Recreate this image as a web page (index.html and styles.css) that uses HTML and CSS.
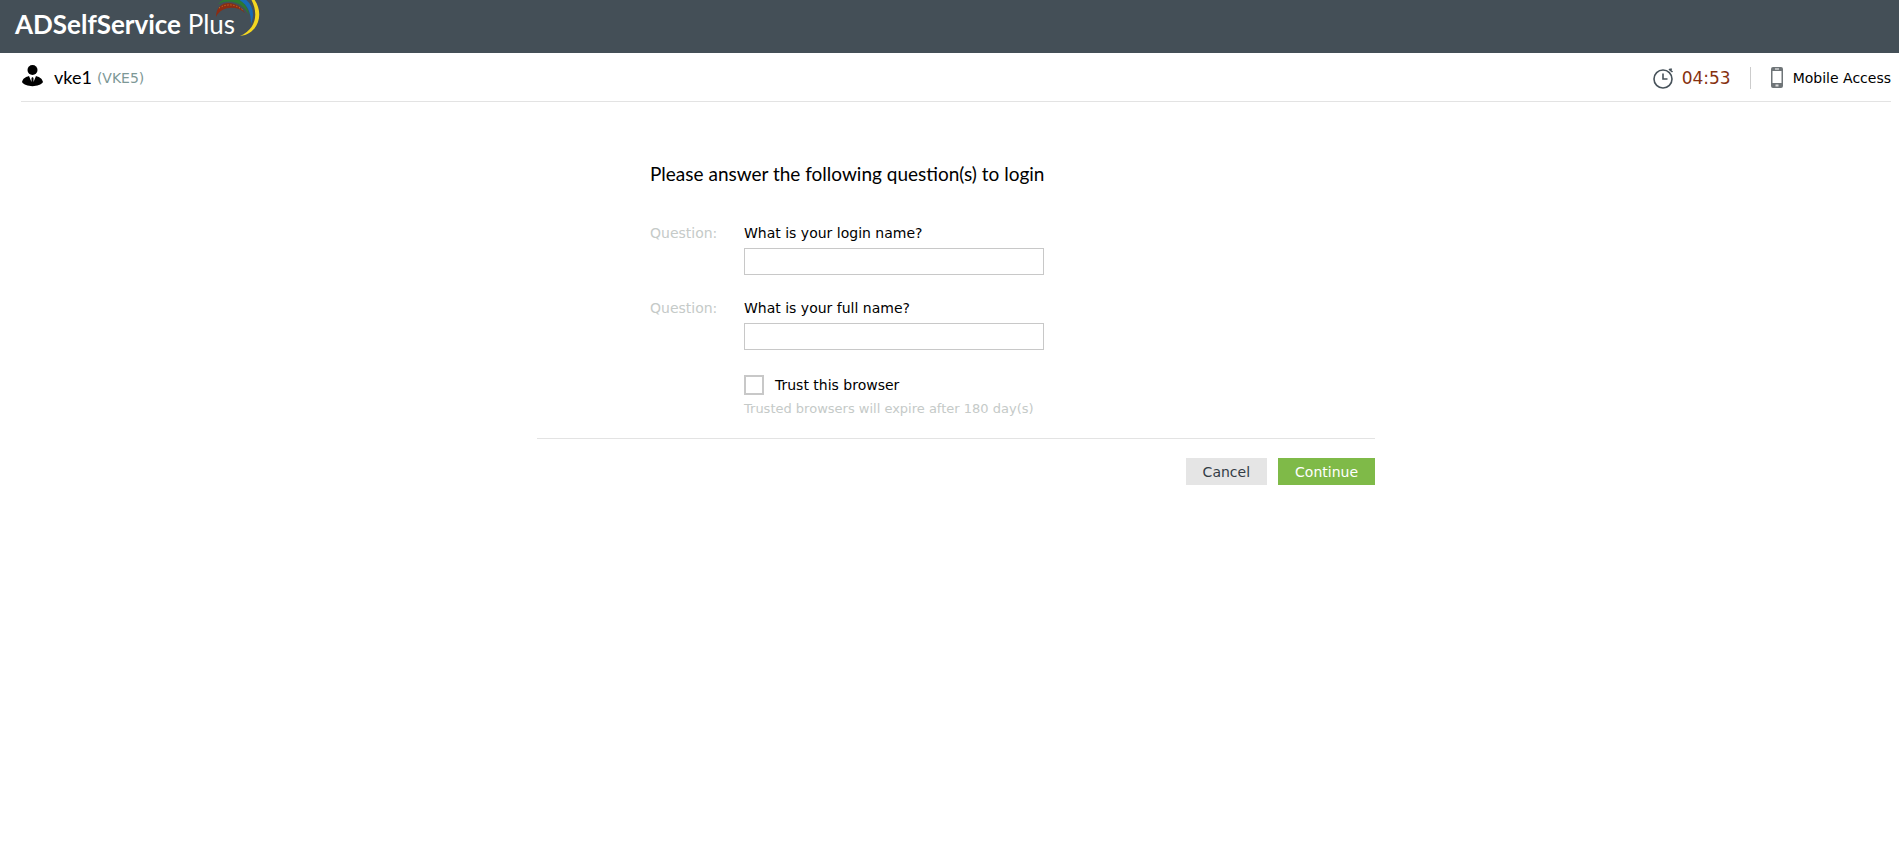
FILE: index.html
```html
<!DOCTYPE html>
<html lang="en">
<head>
<meta charset="utf-8">
<title>ADSelfService Plus</title>
<link rel="stylesheet" href="styles.css">
</head>
<body>
<header class="brand-bar">
  <span class="brand"><b>ADSelfService</b> Plus</span>
  <svg class="brand-arcs" width="48" height="37" viewBox="0 0 48 37" aria-hidden="true">
    <path d="M4 17C4-1 25-1 33 13C25 5 9 6 4 17Z" fill="#8c2c12"/>
    <path d="M6 4C14-5 33-6 37 15C31 3 19-2 6 4Z" fill="#2b7a32"/>
    <path d="M26-1H33C41 5 43 14 39 24C39 12 36 5 26-1Z" fill="#176bb5"/>
    <path d="M39-1H42C53 14 46 34 28 36C44 29 47 14 39-1Z" fill="#f4d720"/>
    <path d="M7 8Q19 1 31 10" fill="none" stroke="#c98a2a" stroke-dasharray="1 2"/>
  </svg>
</header>
<div class="user-bar">
  <svg class="user-icon" width="21" height="22" viewBox="0 0 21 22" aria-hidden="true">
    <circle cx="10.500" cy="5" r="5"/>
    <path d="M0 17C1 13 4 12 7 11L9.500 17L9.500 13L10.500 12L11.500 13L11.500 17L14 11C17 12 20 13 21 17C18 22.500 3 22.500 0 17Z"/>
  </svg>
  <span class="user-name">vke1</span>
  <span class="user-domain">(VKE5)</span>
  <div class="session">
    <svg width="21" height="22" viewBox="0 0 21 22" fill="none" stroke="#47525a" stroke-width="1.600" aria-hidden="true">
      <circle cx="10" cy="12" r="9"/>
      <path d="M10 6.500V12H14.500M16 2L19.500 5M17 4L18.500 1.500"/>
    </svg>
    <span class="timer">04:53</span>
    <a class="mobile" href="#">
      <svg width="12" height="22" viewBox="0 0 12 22" aria-hidden="true">
        <path fill="#6f7578" fill-rule="evenodd" d="M2 0H10Q12 0 12 2V19Q12 21 10 21H2Q0 21 0 19V2Q0 0 2 0ZM1.500 4V16H10.500V4ZM4 1.500V2.500H8V1.500Z"/>
        <rect x="4.500" y="17.500" width="3" height="2" fill="#ddd"/>
      </svg>
      Mobile Access
    </a>
  </div>
</div>
<main>
  <form class="verify">
    <div class="fields">
      <h1>Please answer the following question(s) to login</h1>
      <div class="question">
        <span class="caption">Question:</span>
        <div class="answer">
          <label for="a1">What is your login name?</label>
          <input type="text" id="a1">
        </div>
      </div>
      <div class="question">
        <span class="caption">Question:</span>
        <div class="answer">
          <label for="a2">What is your full name?</label>
          <input type="text" id="a2">
        </div>
      </div>
      <div class="trust">
        <div class="trust-row"><input type="checkbox" id="trust"><label for="trust">Trust this browser</label></div>
        <p>Trusted browsers will expire after 180 day(s)</p>
      </div>
    </div>
    <div class="actions">
      <button type="button" class="cancel">Cancel</button>
      <button type="submit" class="continue">Continue</button>
    </div>
  </form>
</main>
</body>
</html>
```
FILE: styles.css
```css
* { box-sizing: border-box; }
body {
  margin: 0;
  background: #fff;
  color: #000;
  font: 14px/20px Verdana, "DejaVu Sans", sans-serif;
}
.brand-bar {
  display: flex;
  align-items: flex-start;
  height: 53px;
  padding-left: 15px;
  background: #444f57;
}
.brand {
  margin-right: -23px;
  padding-top: 9px;
  color: #fff;
  font: 26px/30px Lato, sans-serif;
}
.user-bar {
  display: flex;
  align-items: center;
  height: 49px;
  margin: 0 8px 0 21px;
  padding-left: 1px;
  border-bottom: 1px solid #e3e3e3;
}
.user-icon { margin-bottom: 2px; }
.user-name {
  margin-left: 11px;
  font: 18px/24px Lato, sans-serif;
}
.user-domain { margin-left: 5px; padding-top: 2px; color: #7d9896; }
.session { display: flex; align-items: center; margin-left: auto; padding-top: 2px; }
.timer { margin-left: 8px; color: #86310f; font-size: 17px; }
.mobile {
  display: flex;
  align-items: center;
  gap: 10px;
  margin-left: 19px;
  padding-left: 20px;
  border-left: 1px solid #ccc;
  color: #000;
  text-decoration: none;
}
main { margin: 0 8px 0 21px; }
.verify {
  width: 838px;
  max-width: 100%;
  margin: 0 auto;
}
.fields {
  padding: 59px 0 19px 113px;
  border-bottom: 1px solid #e3e3e3;
}
h1 {
  margin: 0 0 38px;
  font: 19px/26px Lato, sans-serif;
}
.question { display: flex; margin-bottom: 25px; }
.caption { width: 94px; color: #c5cac8; line-height: 17px; }
.answer { display: flex; flex-direction: column; gap: 6px; width: 300px; }
.answer label { line-height: 17px; }
.answer input {
  height: 27px;
  padding: 0 6px;
  border: 1px solid #c8c8c8;
  font: inherit;
}
.trust { padding-left: 94px; }
.trust-row { display: flex; align-items: center; gap: 11px; }
.trust input {
  appearance: none;
  width: 20px;
  height: 20px;
  margin: 0;
  border: 2px solid #c8c8c8;
}
.trust p { margin: 4px 0 0; color: #c5cac8; font-size: 13px; }
.actions {
  display: flex;
  justify-content: flex-end;
  gap: 11px;
  padding-top: 19px;
}
.actions button {
  height: 27px;
  padding: 0 17px;
  border: 0;
  font: inherit;
}
.cancel { background: #e5e5e5; color: #333c45; }
.continue { background: #7fba48; color: #fff; }
```
